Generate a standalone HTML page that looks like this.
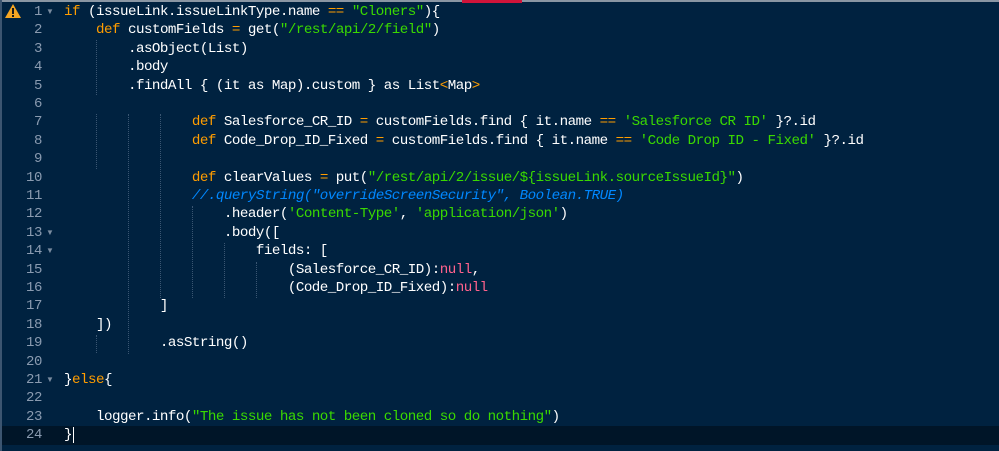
<!DOCTYPE html>
<html><head><style>
html,body{margin:0;padding:0;background:#002240;width:999px;height:451px;overflow:hidden}
#top{position:absolute;left:0;top:0;width:999px;height:2px;background:#8a96a3}
#red{position:absolute;left:462px;top:0;width:60px;height:3px;background:#d0143a}
#lb{position:absolute;left:0;top:0;width:2px;height:451px;background:#3c5570}
.ln{position:absolute;left:0;width:42px;text-align:right;color:#8a9bb0;font:14px "Liberation Mono",monospace;letter-spacing:-0.4px;line-height:18.4px}
.fold{position:absolute;left:46px;color:#7a8ca0;font-size:8px;line-height:18.4px}
.c{position:absolute;left:64px;white-space:pre;color:#fff;font:14.2px "Liberation Mono",monospace;letter-spacing:-0.52px;line-height:18.4px}
.k{color:#ff9d00}.s{color:#3ad900}.n{color:#ff628c}.cm{color:#0088ff;font-style:italic}
.g{position:absolute;width:0;border-left:1px dotted #3a5672}
#hl{position:absolute;left:0;top:426px;width:999px;height:19px;background:#001528}
</style></head><body>
<div id="hl"></div>
<div id="top"></div><div id="red"></div><div id="lb"></div>
<svg style="position:absolute;left:4px;top:3px" width="18" height="16" viewBox="0 0 18 16"><path d="M9 1 L17 15 L1 15 Z" fill="#f5a623"/><rect x="8" y="5" width="2" height="6" fill="#1a1a1a"/><rect x="8" y="12" width="2" height="2" fill="#1a1a1a"/></svg>
<div id="nums"></div>
<div class="g" style="left:96px;top:40px;height:55px"></div>
<div class="g" style="left:96px;top:114px;height:55px"></div>
<div class="g" style="left:128px;top:114px;height:240px"></div>
<div class="g" style="left:160px;top:114px;height:184px"></div>
<div class="g" style="left:96px;top:335px;height:18px"></div>
<div class="g" style="left:192px;top:206px;height:92px"></div>
<div class="g" style="left:224px;top:243px;height:55px"></div>
<div class="g" style="left:256px;top:262px;height:36px"></div>
<script>
var L=[
'<span class="k">if</span> (issueLink.issueLinkType.name <span class="k">==</span> <span class="s">"Cloners"</span>){',
'    <span class="k">def</span> customFields <span class="k">=</span> get(<span class="s">"/rest/api/2/field"</span>)',
'        .asObject(List)',
'        .body',
'        .findAll { (it as Map).custom } as List<span class="k">&lt;</span>Map<span class="k">&gt;</span>',
'',
'                <span class="k">def</span> Salesforce_CR_ID <span class="k">=</span> customFields.find { it.name <span class="k">==</span> <span class="s">\'Salesforce CR ID\'</span> }?.id',
'                <span class="k">def</span> Code_Drop_ID_Fixed <span class="k">=</span> customFields.find { it.name <span class="k">==</span> <span class="s">\'Code Drop ID - Fixed\'</span> }?.id',
'',
'                <span class="k">def</span> clearValues <span class="k">=</span> put(<span class="s">"/rest/api/2/issue/${issueLink.sourceIssueId}"</span>)',
'                <span class="cm">//.queryString("overrideScreenSecurity", Boolean.TRUE)</span>',
'                    .header(<span class="s">\'Content-Type\'</span>, <span class="s">\'application/json\'</span>)',
'                    .body([',
'                        fields: [',
'                            (Salesforce_CR_ID):<span class="n">null</span>,',
'                            (Code_Drop_ID_Fixed):<span class="n">null</span>',
'            ]',
'    ])',
'            .asString()',
'',
'}<span class="k">else</span>{',
'',
'    logger.info(<span class="s">"The issue has not been cloned so do nothing"</span>)',
'}<span style="border-left:1.5px solid #fff;margin-left:1px"></span>'];
var h='',folds=[1,13,14,21];
for(var i=0;i<L.length;i++){var t=3+i*18.4;
h+='<div class="ln" style="top:'+t+'px">'+(i+1)+'</div>';
if(folds.indexOf(i+1)>=0)h+='<div class="fold" style="top:'+t+'px">&#9660;</div>';
h+='<div class="c" style="top:'+t+'px">'+L[i]+'</div>';}
document.getElementById('nums').innerHTML=h;
</script>
</body></html>
